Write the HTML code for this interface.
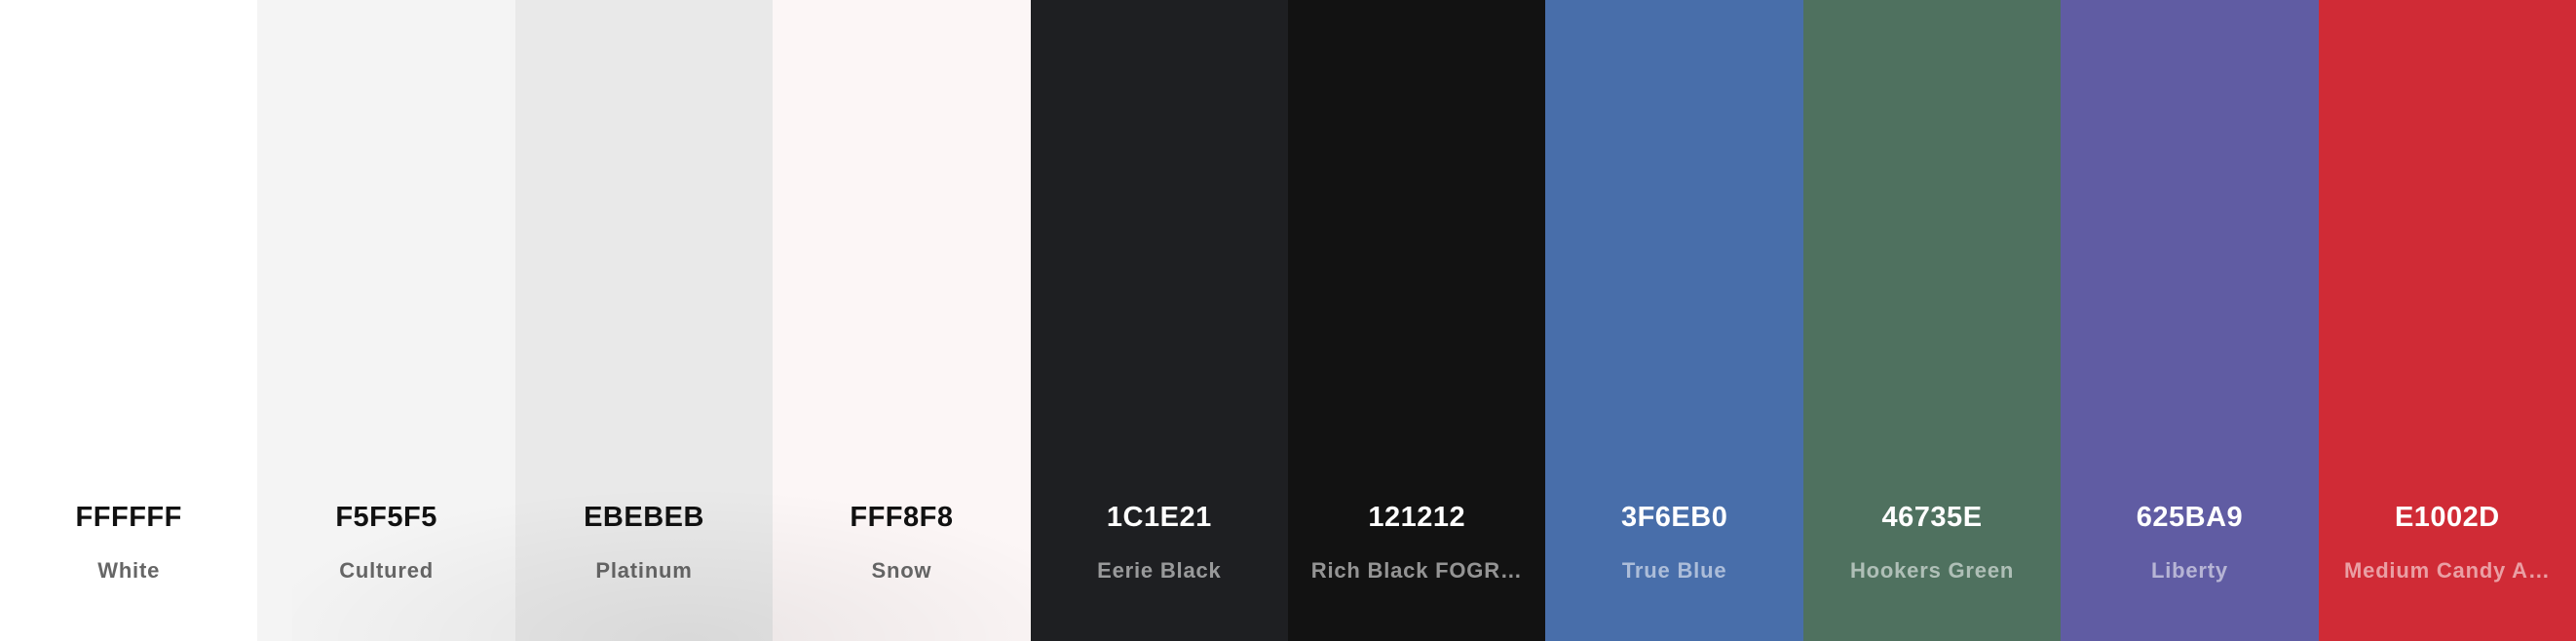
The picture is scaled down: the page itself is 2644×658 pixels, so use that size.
<!DOCTYPE html>
<html><head><meta charset="utf-8"><style>
html,body{margin:0;padding:0;width:2644px;height:658px;overflow:hidden;font-family:"Liberation Sans",sans-serif}
.row{display:flex;width:2644px;height:658px;position:relative;overflow:hidden}
.c{flex:1;position:relative}
.h{position:absolute;left:0;right:0;top:515px;text-align:center;font-size:29px;font-weight:700;letter-spacing:0.5px}
.n{position:absolute;left:0;right:0;top:573px;text-align:center;font-size:22px;font-weight:700;letter-spacing:0.8px;white-space:nowrap}
.l .h{color:#111}.l .n{color:#666}
.d .h{color:#fff}.d .n{color:rgba(255,255,255,.55)}
.sh{position:absolute;left:300px;top:500px;width:900px;height:158px;background:radial-gradient(ellipse 50% 100% at 45% 100%,rgba(0,0,0,.07),rgba(0,0,0,0));pointer-events:none}
</style></head><body><div class="row">
<div class="c l" style="background:#fff"><div class="h">FFFFFF</div><div class="n">White</div></div>
<div class="c l" style="background:#f4f4f4"><div class="h">F5F5F5</div><div class="n">Cultured</div></div>
<div class="c l" style="background:#e9e9e9"><div class="h">EBEBEB</div><div class="n">Platinum</div></div>
<div class="c l" style="background:#fcf6f6"><div class="h">FFF8F8</div><div class="n">Snow</div></div>
<div class="c d" style="background:#1e1f22"><div class="h">1C1E21</div><div class="n">Eerie Black</div></div>
<div class="c d" style="background:#121212"><div class="h">121212</div><div class="n">Rich Black FOGR…</div></div>
<div class="c d" style="background:#486eaa"><div class="h">3F6EB0</div><div class="n">True Blue</div></div>
<div class="c d" style="background:#4f715f"><div class="h">46735E</div><div class="n">Hookers Green</div></div>
<div class="c d" style="background:#605ca3"><div class="h">625BA9</div><div class="n">Liberty</div></div>
<div class="c d" style="background:#d02b36"><div class="h">E1002D</div><div class="n">Medium Candy A…</div></div>
<div class="sh"></div>
</div></body></html>
